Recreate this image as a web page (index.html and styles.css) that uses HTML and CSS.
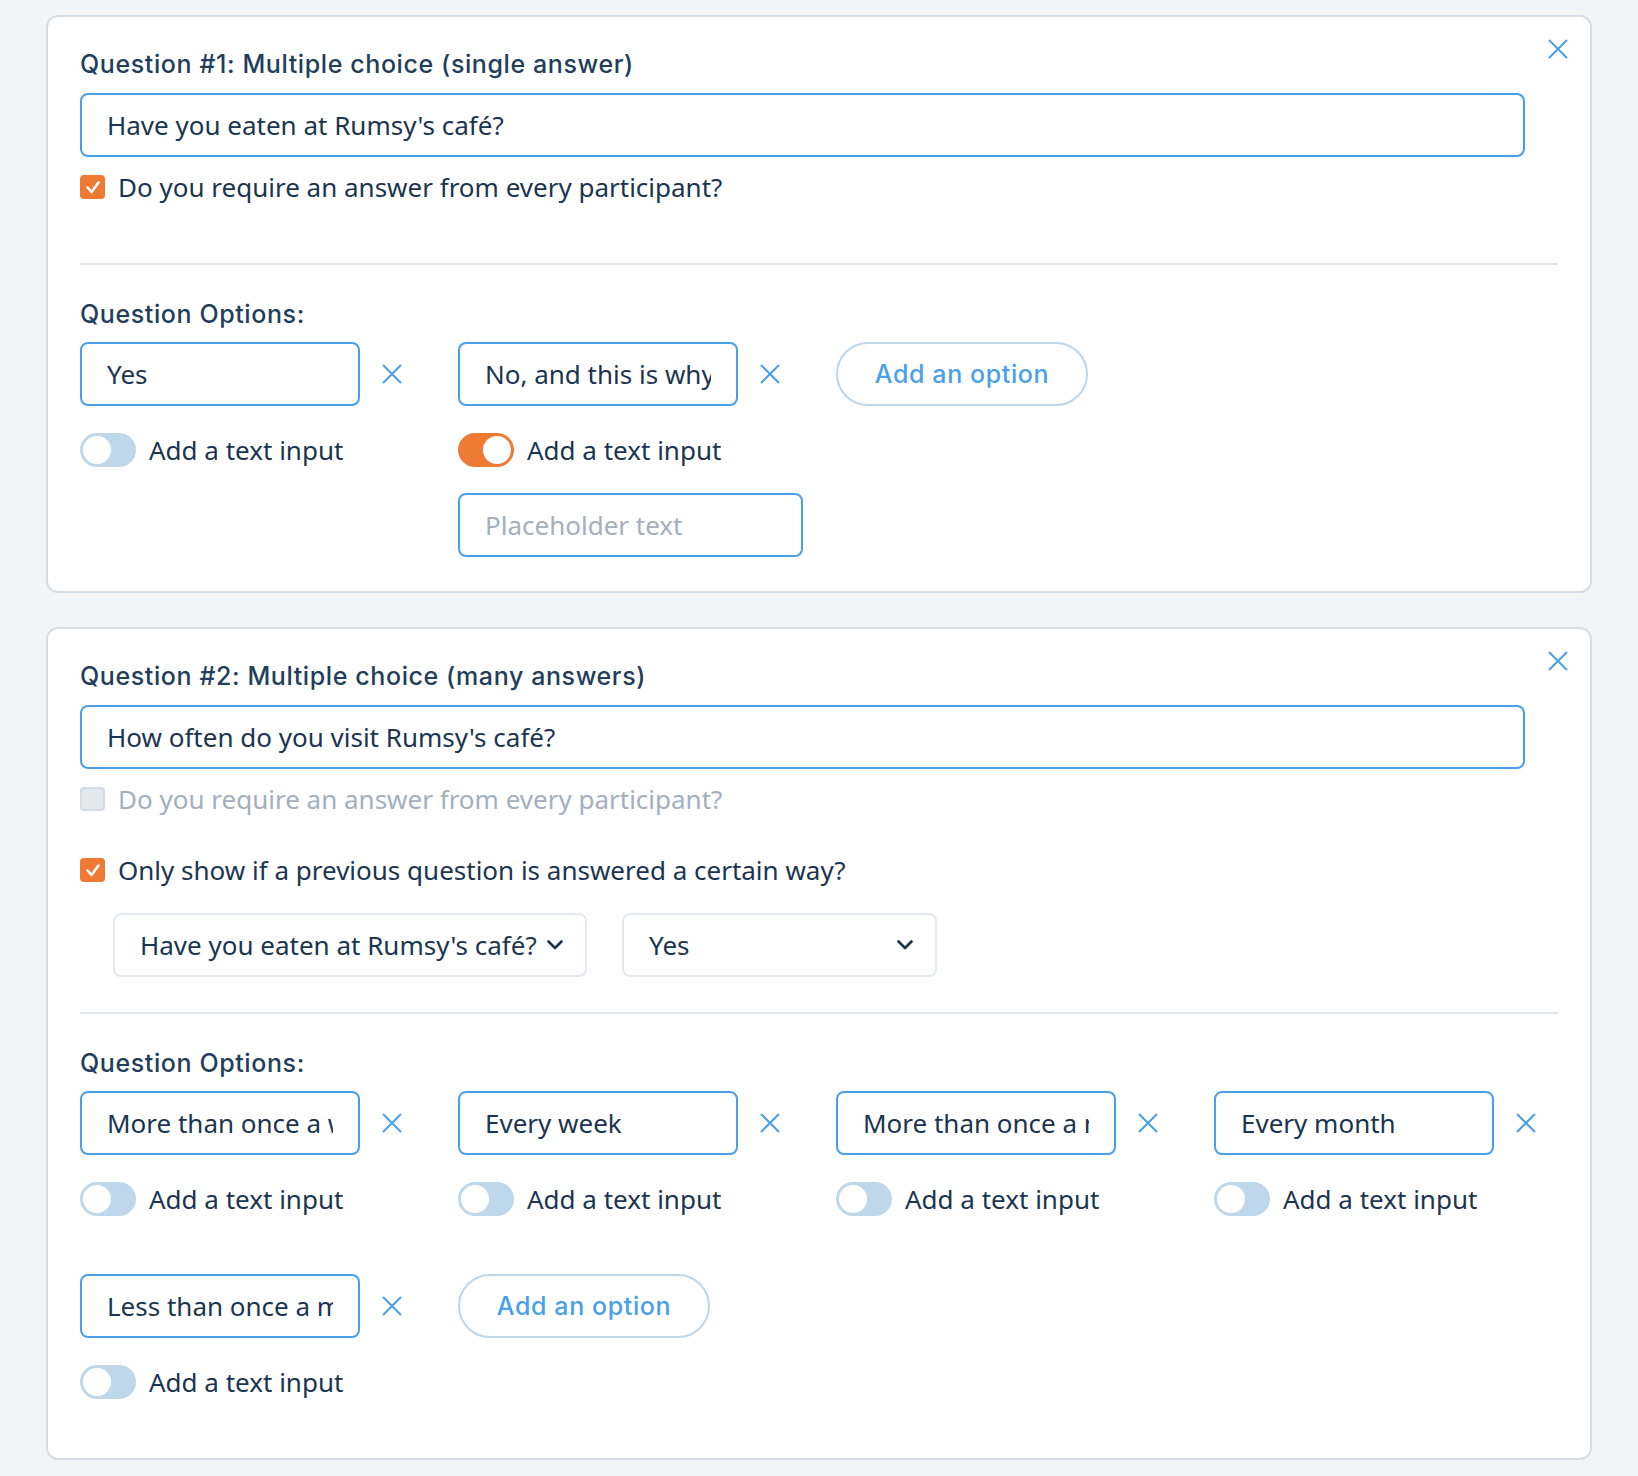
FILE: index.html
```html
<!DOCTYPE html>
<html lang="en">
<head>
<meta charset="utf-8">
<title>Questions</title>
<link rel="stylesheet" href="styles.css">
</head>
<body>
<main class="page">
  <section class="card">
    <button class="close" aria-label="Remove question">
      <svg viewBox="0 0 20 20" width="20" height="20"><path d="M1 1L19 19M19 1L1 19" /></svg>
    </button>
    <h2 class="q-title">Question #1: Multiple choice (single answer)</h2>
    <input class="q-input" type="text" value="Have you eaten at Rumsy's café?">
    <div class="check-row">
      <span class="box box--on"><svg viewBox="0 0 24 24" width="24" height="24"><path d="M6.5 12.5L10.5 17L17.5 7.5" /></svg></span>
      <span class="check-label">Do you require an answer from every participant?</span>
    </div>
    <hr class="divider">
    <h3 class="opt-title">Question Options:</h3>
    <div class="options">
      <div class="option">
        <div class="opt-top">
          <input class="opt-input" type="text" value="Yes">
          <span class="x"><svg viewBox="0 0 20 20" width="20" height="20"><path d="M1 1L19 19M19 1L1 19" /></svg></span>
        </div>
        <div class="toggle-row"><span class="toggle"><span class="knob"></span></span><span>Add a text input</span></div>
      </div>
      <div class="option">
        <div class="opt-top">
          <input class="opt-input" type="text" value="No, and this is why">
          <span class="x"><svg viewBox="0 0 20 20" width="20" height="20"><path d="M1 1L19 19M19 1L1 19" /></svg></span>
        </div>
        <div class="toggle-row"><span class="toggle toggle--on"><span class="knob"></span></span><span>Add a text input</span></div>
        <input class="ph-input" type="text" placeholder="Placeholder text">
      </div>
      <div class="option">
        <button class="add-btn">Add an option</button>
      </div>
    </div>
  </section>

  <section class="card">
    <button class="close" aria-label="Remove question">
      <svg viewBox="0 0 20 20" width="20" height="20"><path d="M1 1L19 19M19 1L1 19" /></svg>
    </button>
    <h2 class="q-title">Question #2: Multiple choice (many answers)</h2>
    <input class="q-input" type="text" value="How often do you visit Rumsy's café?">
    <div class="check-row check-row--disabled">
      <span class="box box--disabled"></span>
      <span class="check-label">Do you require an answer from every participant?</span>
    </div>
    <div class="check-row check-row--tight">
      <span class="box box--on"><svg viewBox="0 0 24 24" width="24" height="24"><path d="M6.5 12.5L10.5 17L17.5 7.5" /></svg></span>
      <span class="check-label">Only show if a previous question is answered a certain way?</span>
    </div>
    <div class="conditions">
      <div class="select select--wide"><span>Have you eaten at Rumsy's café?</span><svg viewBox="0 0 16 10" width="16" height="10"><path d="M1.5 1.5L8 8L14.5 1.5" /></svg></div>
      <div class="select select--narrow"><span>Yes</span><svg viewBox="0 0 16 10" width="16" height="10"><path d="M1.5 1.5L8 8L14.5 1.5" /></svg></div>
    </div>
    <hr class="divider">
    <h3 class="opt-title">Question Options:</h3>
    <div class="options options--last">
      <div class="option">
        <div class="opt-top">
          <input class="opt-input" type="text" value="More than once a week">
          <span class="x"><svg viewBox="0 0 20 20" width="20" height="20"><path d="M1 1L19 19M19 1L1 19" /></svg></span>
        </div>
        <div class="toggle-row"><span class="toggle"><span class="knob"></span></span><span>Add a text input</span></div>
      </div>
      <div class="option">
        <div class="opt-top">
          <input class="opt-input" type="text" value="Every week">
          <span class="x"><svg viewBox="0 0 20 20" width="20" height="20"><path d="M1 1L19 19M19 1L1 19" /></svg></span>
        </div>
        <div class="toggle-row"><span class="toggle"><span class="knob"></span></span><span>Add a text input</span></div>
      </div>
      <div class="option">
        <div class="opt-top">
          <input class="opt-input" type="text" value="More than once a month">
          <span class="x"><svg viewBox="0 0 20 20" width="20" height="20"><path d="M1 1L19 19M19 1L1 19" /></svg></span>
        </div>
        <div class="toggle-row"><span class="toggle"><span class="knob"></span></span><span>Add a text input</span></div>
      </div>
      <div class="option">
        <div class="opt-top">
          <input class="opt-input" type="text" value="Every month">
          <span class="x"><svg viewBox="0 0 20 20" width="20" height="20"><path d="M1 1L19 19M19 1L1 19" /></svg></span>
        </div>
        <div class="toggle-row"><span class="toggle"><span class="knob"></span></span><span>Add a text input</span></div>
      </div>
      <div class="option">
        <div class="opt-top">
          <input class="opt-input" type="text" value="Less than once a month">
          <span class="x"><svg viewBox="0 0 20 20" width="20" height="20"><path d="M1 1L19 19M19 1L1 19" /></svg></span>
        </div>
        <div class="toggle-row"><span class="toggle"><span class="knob"></span></span><span>Add a text input</span></div>
      </div>
      <div class="option">
        <button class="add-btn">Add an option</button>
      </div>
    </div>
  </section>
</main>
</body>
</html>
```

FILE: styles.css
```css
* { box-sizing: border-box; }

body {
  margin: 0;
  background: #f3f4f6;
  font-family: "Noto Sans", "Open Sans", sans-serif;
  font-size: 26px;
  color: #1b3550;
}

.page {
  padding: 15px 46px 17px;
  display: flex;
  flex-direction: column;
  gap: 34px;
}

.card {
  position: relative;
  display: flex;
  flex-direction: column;
  background: #ffffff;
  border: 2px solid #d6dee5;
  border-radius: 12px;
  padding: 31px 32px 34px;
}

.close {
  position: absolute;
  top: 22px;
  right: 22px;
  width: 20px;
  height: 20px;
  padding: 0;
  border: 0;
  background: none;
  display: flex;
}

.close svg path, .x svg path {
  stroke: #4a9fea;
  stroke-width: 2;
  fill: none;
}

.q-title, .opt-title {
  margin: 0;
  font-family: Inter, "Noto Sans", sans-serif;
  font-weight: 500;
  font-size: 25px;
  line-height: 32px;
  color: #223e5a;
  letter-spacing: 0.6px;
}

.q-input {
  display: block;
  width: 1445px;
  height: 64px;
  margin: 13px 0 0;
  border: 2px solid #4a9fea;
  border-radius: 8px;
  padding: 0 25px;
  font-family: "Noto Sans", sans-serif;
  font-size: 26px;
  color: #1b3550;
  background: #fff;
  outline: none;
}

.check-row {
  display: flex;
  align-items: center;
  gap: 13px;
  height: 30px;
  margin-top: 15px;
  margin-bottom: 41px;
  white-space: nowrap;
}

.check-row + .check-row { margin-top: 0; }

.check-row--tight { margin-bottom: 28px; }

.check-row--disabled { color: #a3afbd; }

.box {
  width: 25px;
  height: 24px;
  border-radius: 4px;
  display: flex;
  align-items: center;
  justify-content: center;
  flex: none;
}

.box--on { background: #ef7a33; }

.box--on svg path {
  stroke: #ffffff;
  stroke-width: 2.6;
  stroke-linecap: round;
  stroke-linejoin: round;
  fill: none;
}

.box--disabled {
  background: #e3e8ef;
  border: 2px solid #d3dbe5;
}

.divider {
  margin: 20px 0 0;
  border: 0;
  height: 2px;
  background: #dde7f0;
  width: 100%;
}

.opt-title { margin-top: 33px; }

.options {
  display: flex;
  flex-wrap: wrap;
  column-gap: 56px;
  row-gap: 58px;
  margin-top: 12px;
}

.options--last { padding-bottom: 25px; }

.option {
  width: 322px;
  display: flex;
  flex-direction: column;
}

.opt-top {
  display: flex;
  align-items: center;
}

.opt-input, .ph-input {
  width: 280px;
  height: 64px;
  border: 2px solid #4a9fea;
  border-radius: 8px;
  padding: 0 25px;
  font-family: "Noto Sans", sans-serif;
  font-size: 26px;
  color: #1b3550;
  background: #fff;
  outline: none;
  flex: none;
}

.ph-input {
  width: 345px;
  margin-top: 26px;
}

.ph-input::placeholder { color: #a3afbd; }

.x {
  margin-left: 22px;
  width: 20px;
  height: 20px;
  display: flex;
}

.toggle-row {
  display: flex;
  align-items: center;
  gap: 13px;
  height: 34px;
  margin-top: 27px;
  white-space: nowrap;
}

.toggle {
  width: 56px;
  height: 34px;
  border-radius: 17px;
  background: #bed7ea;
  padding: 3px;
  display: flex;
  align-items: center;
  flex: none;
}

.toggle--on {
  background: #ef7a33;
  justify-content: flex-end;
}

.knob {
  width: 28px;
  height: 28px;
  border-radius: 50%;
  background: #ffffff;
}

.add-btn {
  width: 252px;
  height: 64px;
  border: 2px solid #bdd6ea;
  border-radius: 32px;
  background: #fff;
  color: #4a9fea;
  font-family: Inter, "Noto Sans", sans-serif;
  font-weight: 500;
  font-size: 25px;
  letter-spacing: 0.6px;
  padding: 0;
}

.conditions {
  display: flex;
  gap: 35px;
  margin-left: 33px;
  margin-bottom: 15px;
}

.select {
  height: 64px;
  border: 2px solid #e3e9f0;
  border-radius: 8px;
  padding: 0 22px 0 25px;
  display: flex;
  align-items: center;
  justify-content: space-between;
  white-space: nowrap;
}

.select--wide { width: 474px; }
.select--narrow { width: 315px; }

.select svg path {
  stroke: #1b3550;
  stroke-width: 2.6;
  stroke-linecap: round;
  stroke-linejoin: round;
  fill: none;
}
```
